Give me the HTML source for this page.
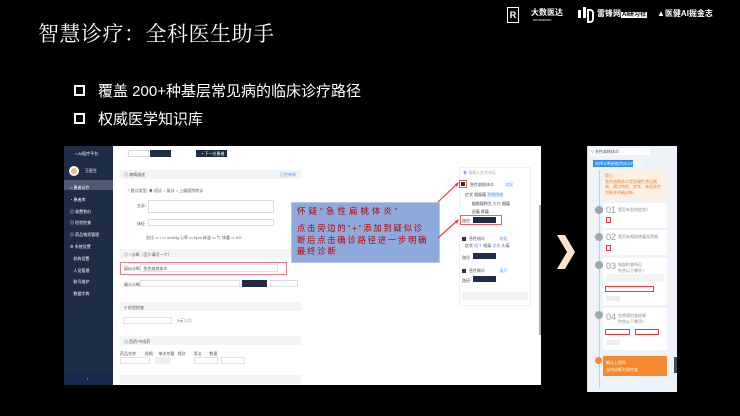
<!DOCTYPE html>
<html><head><meta charset="utf-8"><style>
*{margin:0;padding:0;box-sizing:border-box}
body{width:740px;height:416px;background:#000;position:relative;overflow:hidden;font-family:"Liberation Sans","Noto Sans CJK SC",sans-serif}
.a{position:absolute}
.t{font-size:4px;color:#555;white-space:nowrap}
.w{color:#fff}
</style></head><body>
<div class="a w" style="left:38px;top:18px;font-size:21px;font-family:'Liberation Serif','Noto Serif CJK SC',serif;letter-spacing:0.5px">智慧诊疗：全科医生助手</div>
<div class="a" style="left:74px;top:85px;width:11px;height:11px;border:2px solid #fff"></div>
<div class="a w" style="left:98px;top:80px;font-size:15px">覆盖 200+种基层常见病的临床诊疗路径</div>
<div class="a" style="left:74px;top:113px;width:11px;height:11px;border:2px solid #fff"></div>
<div class="a w" style="left:98px;top:108px;font-size:15px">权威医学知识库</div>
<div class="a" style="left:507px;top:7px;width:12px;height:16px;border:1px solid #fff;color:#fff;font-size:9px;font-weight:bold;text-align:center;line-height:14px">R</div>
<div class="a w" style="left:531px;top:7px;font-size:8px;font-weight:bold">大数医达</div>
<div class="a w" style="left:533px;top:18px;font-size:3px">RXTHINKING</div>
<div class="a" style="left:578px;top:10px;width:3px;height:8px;background:#fff"></div>
<div class="a" style="left:583px;top:7px;width:3px;height:11px;background:#fff"></div>
<div class="a" style="left:587px;top:9px;width:7px;height:14px;border:2px solid #fff;border-radius:0 4px 4px 0"></div>
<div class="a w" style="left:597px;top:8px;font-size:8px;font-weight:bold">雷锋网<span style="background:#fff;color:#000;font-size:6px;padding:0 1px">AI研习社</span></div>
<div class="a w" style="left:657px;top:8px;font-size:8px;font-weight:bold">▲医健AI掘金志</div>
<div class="a" style="left:64px;top:146px;width:477px;height:239px;background:#fff"></div>
<div class="a" style="left:64px;top:146px;width:49px;height:239px;background:#1f2c46"></div>
<div class="a t w" style="left:75px;top:151px">⌂ AI医疗平台</div>
<div class="a" style="left:69px;top:166px;width:10px;height:10px;border-radius:50%;background:#e8c070;border:2px solid #fff"></div>
<div class="a t w" style="left:85px;top:168px">王医生</div>
<div class="a" style="left:64px;top:180px;width:49px;height:10px;background:#4e5b72"></div>
<div class="a t w" style="left:70px;top:182px;line-height:11.8px">⌂ 患者诊疗<br>◔ 患者库<br>▤ 收费划价<br>▤ 检验检查<br>▤ 药品物资管理<br>⚙ 系统设置<br>&nbsp;&nbsp;&nbsp;机构设置<br>&nbsp;&nbsp;&nbsp;人员管理<br>&nbsp;&nbsp;&nbsp;账号维护<br>&nbsp;&nbsp;&nbsp;数据字典</div>
<div class="a" style="left:64px;top:372px;width:49px;height:13px;background:#1a2a4e"></div>
<div class="a t w" style="left:87px;top:376px">‹</div>
<div class="a" style="left:128px;top:150px;width:21px;height:7px;border:1px solid #ddd"></div>
<div class="a" style="left:150px;top:150px;width:21px;height:7px;background:#1f2c46"></div>
<div class="a" style="left:196px;top:150px;width:31px;height:7px;background:#1f2c46"></div>
<div class="a t w" style="left:201px;top:151px">+ 下一位患者</div>
<div class="a" style="left:120px;top:170px;width:181px;height:9px;background:#f3f4f6"></div>
<div class="a t" style="left:124px;top:172px">▤ 病情描述</div>
<div class="a t" style="left:280px;top:172px;color:#5b9be8">已完善病</div>
<div class="a t" style="left:128px;top:188px">* 首诊类型: ◉ 初诊 ○ 复诊 ○ 上级医院转诊</div>
<div class="a t" style="left:137px;top:203px">主诉:</div>
<div class="a" style="left:148px;top:200px;width:126px;height:13px;border:1px solid #ddd"></div>
<div class="a t" style="left:137px;top:221px">体征:</div>
<div class="a" style="left:148px;top:219px;width:126px;height:7px;border:1px solid #ddd"></div>
<div class="a t" style="left:146px;top:235px">血压 ▭ / ▭ mmHg 心率 ▭ bpm 体温 ▭ ℃ 体重 ▭ KG</div>
<div class="a" style="left:120px;top:249px;width:181px;height:9px;background:#f3f4f6"></div>
<div class="a t" style="left:124px;top:252px">▤ * 诊断（至少填写一个）</div>
<div class="a" style="left:120px;top:262px;width:167px;height:13px;border:1px solid #f07c7c"></div>
<div class="a" style="left:140px;top:264px;width:138px;height:8px;border:1px solid #e2e2e2"></div>
<div class="a t" style="left:124px;top:266px">疑似诊断 &nbsp; 急性扁桃体炎</div>
<div class="a t" style="left:124px;top:282px">确诊诊断</div>
<div class="a" style="left:140px;top:280px;width:100px;height:7px;border:1px solid #e2e2e2"></div>
<div class="a" style="left:242px;top:280px;width:25px;height:7px;background:#1f2c46"></div>
<div class="a" style="left:270px;top:280px;width:28px;height:7px;border:1px solid #ddd"></div>
<div class="a" style="left:120px;top:302px;width:181px;height:9px;background:#f3f4f6"></div>
<div class="a t" style="left:124px;top:305px">⚲ 检验检查</div>
<div class="a" style="left:123px;top:317px;width:49px;height:7px;border:1px solid #e2e2e2"></div>
<div class="a t" style="left:177px;top:318px">0元 ▯ ◎</div>
<div class="a" style="left:120px;top:336px;width:181px;height:9px;background:#f3f4f6"></div>
<div class="a t" style="left:124px;top:339px">▤ 西药/中成药</div>
<div class="a t" style="left:120px;top:351px">药品名称 &nbsp;&nbsp;&nbsp;&nbsp;&nbsp;&nbsp; 规格 &nbsp;&nbsp;&nbsp; 单次剂量 &nbsp; 频次 &nbsp;&nbsp;&nbsp;&nbsp;&nbsp; 用法 &nbsp;&nbsp;&nbsp;&nbsp;&nbsp; 数量</div>
<div class="a" style="left:120px;top:357px;width:30px;height:7px;border:1px solid #e2e2e2"></div>
<div class="a" style="left:155px;top:357px;width:16px;height:7px;background:#f0f0f0"></div>
<div class="a" style="left:194px;top:357px;width:24px;height:7px;border:1px solid #e2e2e2"></div>
<div class="a" style="left:221px;top:357px;width:24px;height:7px;border:1px solid #e2e2e2"></div>
<div class="a" style="left:120px;top:375px;width:181px;height:9px;background:#f3f4f6"></div>
<div class="a" style="left:539px;top:205px;width:2px;height:130px;background:#aaa"></div>
<div class="a" style="left:459px;top:167px;width:72px;height:139px;border:1px solid #eef2f6;background:#fff"></div>
<div class="a t" style="left:463px;top:170px;color:#5b9be8">◉ <span style="color:#aaa">请输入症状体征</span></div>
<div class="a" style="left:459px;top:180px;width:8px;height:8px;border:1px solid #f06060"></div>
<div class="a" style="left:461px;top:182px;width:4px;height:4px;background:#333"></div>
<div class="a t" style="left:470px;top:182px">急性扁桃体炎 <span style="color:#5b9be8">&nbsp;&nbsp;&nbsp;&nbsp;&nbsp;&nbsp;&nbsp;&nbsp;&nbsp;收起</span></div>
<div class="a t" style="left:465px;top:191px;line-height:8.5px">症状 <span style="background:#f1f1f1">咽部痛</span> <span style="background:#eaf2fd;color:#5b9be8">吞咽困难</span><br>&nbsp;&nbsp;&nbsp;&nbsp;&nbsp;&nbsp;<span style="background:#f1f1f1">扁桃体肿大</span> <span style="color:#5b9be8">发热</span> <span style="background:#f1f1f1">咽痛</span><br>&nbsp;&nbsp;&nbsp;&nbsp;&nbsp;&nbsp;<span style="background:#f1f1f1">乏痛</span> <span style="background:#f1f1f1">疼痛</span></div>
<div class="a" style="left:460px;top:215px;width:42px;height:10px;border:1px solid #f06060"></div>
<div class="a" style="left:473px;top:217px;width:23px;height:6px;background:#1f2c46"></div>
<div class="a t" style="left:462px;top:218px">路径</div>
<div class="a" style="left:462px;top:237px;width:4px;height:4px;background:#333"></div>
<div class="a t" style="left:469px;top:236px">急性咽炎 <span style="color:#5b9be8">&nbsp;&nbsp;&nbsp;&nbsp;&nbsp;&nbsp;&nbsp;&nbsp;&nbsp;&nbsp;&nbsp;&nbsp;收起</span></div>
<div class="a t" style="left:465px;top:243px">症状 <span style="color:#5b9be8">咽干</span> 咽痛 <span style="color:#5b9be8">发热</span> 头痛</div>
<div class="a" style="left:473px;top:253px;width:23px;height:6px;background:#1f2c46"></div>
<div class="a t" style="left:462px;top:255px">路径</div>
<div class="a" style="left:462px;top:269px;width:4px;height:4px;background:#333"></div>
<div class="a t" style="left:469px;top:268px">急性喉炎 <span style="color:#5b9be8">&nbsp;&nbsp;&nbsp;&nbsp;&nbsp;&nbsp;&nbsp;&nbsp;&nbsp;&nbsp;&nbsp;&nbsp;展开</span></div>
<div class="a" style="left:473px;top:276px;width:23px;height:6px;background:#1f2c46"></div>
<div class="a t" style="left:462px;top:278px">路径</div>
<div class="a" style="left:462px;top:292px;width:66px;height:8px;background:#f3f4f6"></div>
<div class="a" style="left:291px;top:202px;width:149px;height:61px;background:#8ea9db;border:1px solid #b7c9ea"></div>
<div class="a" style="left:297px;top:206px;font-size:8.5px;color:#c00000;letter-spacing:3px;line-height:11px;white-space:nowrap">怀疑“急性扁桃体炎”</div>
<div class="a" style="left:297px;top:223px;font-size:8.3px;color:#c00000;letter-spacing:1.8px;line-height:11.5px;white-space:nowrap">点击旁边的“+”添加到疑似诊<br>断后点击确诊路径进一步明确<br>最终诊断</div>
<svg class="a" style="left:436px;top:178px" width="30" height="70"><path d="M2 24 L22 5" stroke="#f33" stroke-width="1.2"/><path d="M19 6 L23 4 L21 9" fill="#f33"/><path d="M2 60 L22 42" stroke="#f33" stroke-width="1.2"/><path d="M19 43 L23 41 L21 46" fill="#f33"/></svg>
<svg class="a" style="left:555px;top:234px" width="22" height="36"><path d="M2 1 L10 1 L20 18 L10 35 L2 35 L12 18 Z" fill="#fde3cc"/></svg>
<div class="a" style="left:587px;top:146px;width:90px;height:246px;background:#eef3fa;border-left:1px solid #ddd"></div>
<div class="a" style="left:590px;top:148px;width:60px;height:7px;background:#fff"></div>
<div class="a t" style="left:591px;top:149px;color:#5b9be8">⚲ <span style="color:#555">急性扁桃体炎</span></div>
<div class="a" style="left:593px;top:160px;width:40px;height:7px;background:#2d8cf0"></div>
<div class="a t w" style="left:595px;top:161px">选择诊断依据完成诊疗路径</div>
<div class="a" style="left:599px;top:170px;width:1px;height:218px;background:#ccd"></div>
<div class="a" style="left:603px;top:170px;width:64px;height:29px;background:#fdf0e4"></div>
<div class="a t" style="left:605px;top:173px;color:#f08030;line-height:5.5px">提示<br>急性扁桃体炎是急慢性常见病<br>病，通过病程、症状、体征综合<br>判断并明确诊断。</div>
<div class="a" style="left:595px;top:206px;width:8px;height:8px;border-radius:50%;background:#9aa"></div>
<div class="a" style="left:603px;top:203px;width:64px;height:25px;background:#fff"></div>
<div class="a" style="left:606px;top:205px;font-size:9px;color:#999">01</div>
<div class="a t" style="left:618px;top:207px;color:#888">是否有发热症状?</div>
<div class="a" style="left:606px;top:217px;width:5px;height:6px;border:1px solid #f33;background:#eaf2fd"></div>
<div class="a" style="left:595px;top:233px;width:8px;height:8px;border-radius:50%;background:#9aa"></div>
<div class="a" style="left:603px;top:230px;width:64px;height:25px;background:#fff"></div>
<div class="a" style="left:606px;top:232px;font-size:9px;color:#999">02</div>
<div class="a t" style="left:618px;top:234px;color:#888">是否有咽部疼痛及吞咽</div>
<div class="a" style="left:606px;top:245px;width:5px;height:6px;border:1px solid #f33;background:#eaf2fd"></div>
<div class="a" style="left:595px;top:261px;width:8px;height:8px;border-radius:50%;background:#9aa"></div>
<div class="a" style="left:603px;top:258px;width:64px;height:47px;background:#fff"></div>
<div class="a" style="left:606px;top:261px;font-size:9px;color:#999">03</div>
<div class="a t" style="left:618px;top:262px;color:#888">咽部检查所见<br>符合以下哪项?</div>
<div class="a" style="left:606px;top:274px;width:58px;height:8px;background:#f3f3f3"></div>
<div class="a" style="left:605px;top:286px;width:49px;height:6px;border:1px solid #f33"></div>
<div class="a" style="left:606px;top:296px;width:14px;height:5px;background:#eee"></div>
<div class="a" style="left:595px;top:311px;width:8px;height:8px;border-radius:50%;background:#9aa"></div>
<div class="a" style="left:603px;top:308px;width:64px;height:42px;background:#fff"></div>
<div class="a" style="left:606px;top:312px;font-size:9px;color:#999">04</div>
<div class="a t" style="left:618px;top:313px;color:#888">血常规检查结果<br>符合以下哪项?</div>
<div class="a" style="left:605px;top:329px;width:25px;height:6px;border:1px solid #f33"></div>
<div class="a" style="left:635px;top:329px;width:24px;height:6px;border:1px solid #f33"></div>
<div class="a" style="left:606px;top:340px;width:14px;height:5px;background:#eee"></div>
<div class="a" style="left:595px;top:357px;width:7px;height:7px;border-radius:50%;background:#f5892f"></div>
<div class="a" style="left:603px;top:356px;width:64px;height:20px;background:#f5892f"></div>
<div class="a t w" style="left:606px;top:359px;line-height:7px">确认上面所<br>支持诊断为急性扁</div>
<div class="a" style="left:674px;top:357px;width:3px;height:16px;background:#3a4a60"></div>
</body></html>
